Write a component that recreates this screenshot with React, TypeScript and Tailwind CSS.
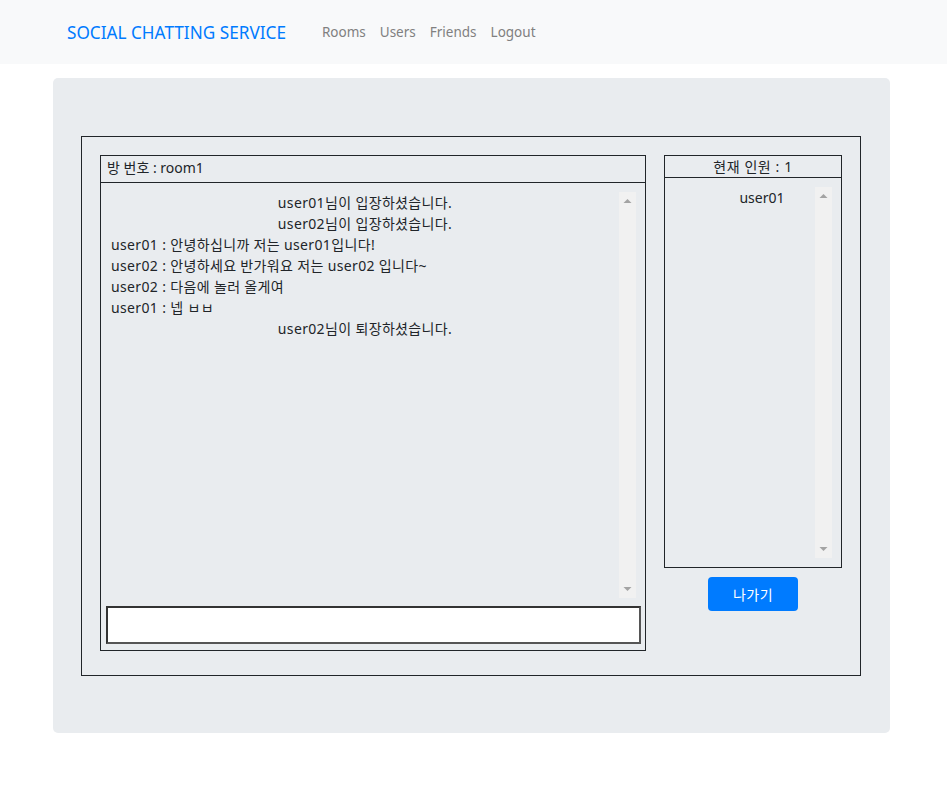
import React from "react";

const font = { fontFamily: '"Noto Sans", "Noto Sans CJK KR", sans-serif' };

function Track({ className }: { className: string }) {
  return (
    <div className={"flex flex-col justify-between items-center bg-[#f1f1f1] w-[17px] " + className}>
      <svg width="17" height="17" viewBox="0 0 17 17" className="block">
        <polygon points="4.5,11 12.5,11 8.5,7" fill="#a3a3a3" />
      </svg>
      <svg width="17" height="17" viewBox="0 0 17 17" className="block">
        <polygon points="4.5,6 12.5,6 8.5,10" fill="#a3a3a3" />
      </svg>
    </div>
  );
}

export default function App() {
  const lines: { t: string; sys?: boolean }[] = [
    { t: "user01님이 입장하셨습니다.", sys: true },
    { t: "user02님이 입장하셨습니다.", sys: true },
    { t: "user01 : 안녕하십니까 저는 user01입니다!" },
    { t: "user02 : 안녕하세요 반가워요 저는 user02 입니다~" },
    { t: "user02 : 다음에 놀러 올게여" },
    { t: "user01 : 넵 ㅂㅂ" },
    { t: "user02님이 퇴장하셨습니다.", sys: true },
  ];
  return (
    <div className="min-h-[790px] bg-white text-[#212529]" style={font}>
      <nav className="h-[64px] bg-[#f8f9fa] flex items-center pl-[67px] pt-[2px]">
        <span className="text-[17.2px] text-[#007bff] leading-none">SOCIAL CHATTING SERVICE</span>
        <div className="flex ml-[36px] gap-[14px] text-[13.5px] text-[#808080] leading-none">
          <span>Rooms</span>
          <span>Users</span>
          <span>Friends</span>
          <span>Logout</span>
        </div>
      </nav>
      <div className="pt-[14px] pl-[53px]">
        <div className="w-[837px] h-[655px] rounded-[5px] bg-[#e9ecef] pt-[58px] pl-[28px]">
          <div className="w-[780px] h-[540px] border border-[#212529] pt-[18px] pl-[18px] flex items-start">
            <div className="w-[546px] h-[496px] border border-[#212529] flex flex-col">
              <div className="h-[27px] border-b border-[#212529] pl-[6px] pb-[3px] flex items-center text-[14px]">
                방 번호 : room1
              </div>
              <div className="mt-[9px] ml-[5px] mr-[9px] h-[406px] flex">
                <div className="flex-1 pl-[5px] text-[14px] leading-[21px] tracking-[0.35px]">
                  {lines.map((l, i) => (
                    <div key={i} className={l.sys ? "text-center" : ""}>
                      {l.t}
                    </div>
                  ))}
                </div>
                <Track className="h-[406px]" />
              </div>
              <div className="mt-[8px] ml-[5px] mr-[4px] h-[38px] border-2 border-t-[#333] border-l-[#333] border-b-[#555] border-r-[#555] bg-white"></div>
            </div>
            <div className="ml-[18px] w-[178px] flex flex-col items-center">
              <div className="w-[178px] h-[413px] border border-[#212529] flex flex-col">
                <div className="h-[22px] border-b border-[#212529] flex items-center justify-center text-[14px] tracking-[0.6px]">
                  현재 인원 : 1
                </div>
                <div className="flex mt-[9px] mr-[9px] h-[371px]">
                  <div className="flex-1 pl-[44px] text-center text-[14px] leading-[21px]">user01</div>
                  <Track className="h-[371px]" />
                </div>
              </div>
              <button className="mt-[9px] w-[90px] h-[34px] rounded-[4px] bg-[#007bff] text-white text-[14px] tracking-[0.5px]">
                나가기
              </button>
            </div>
          </div>
        </div>
      </div>
    </div>
  );
}
